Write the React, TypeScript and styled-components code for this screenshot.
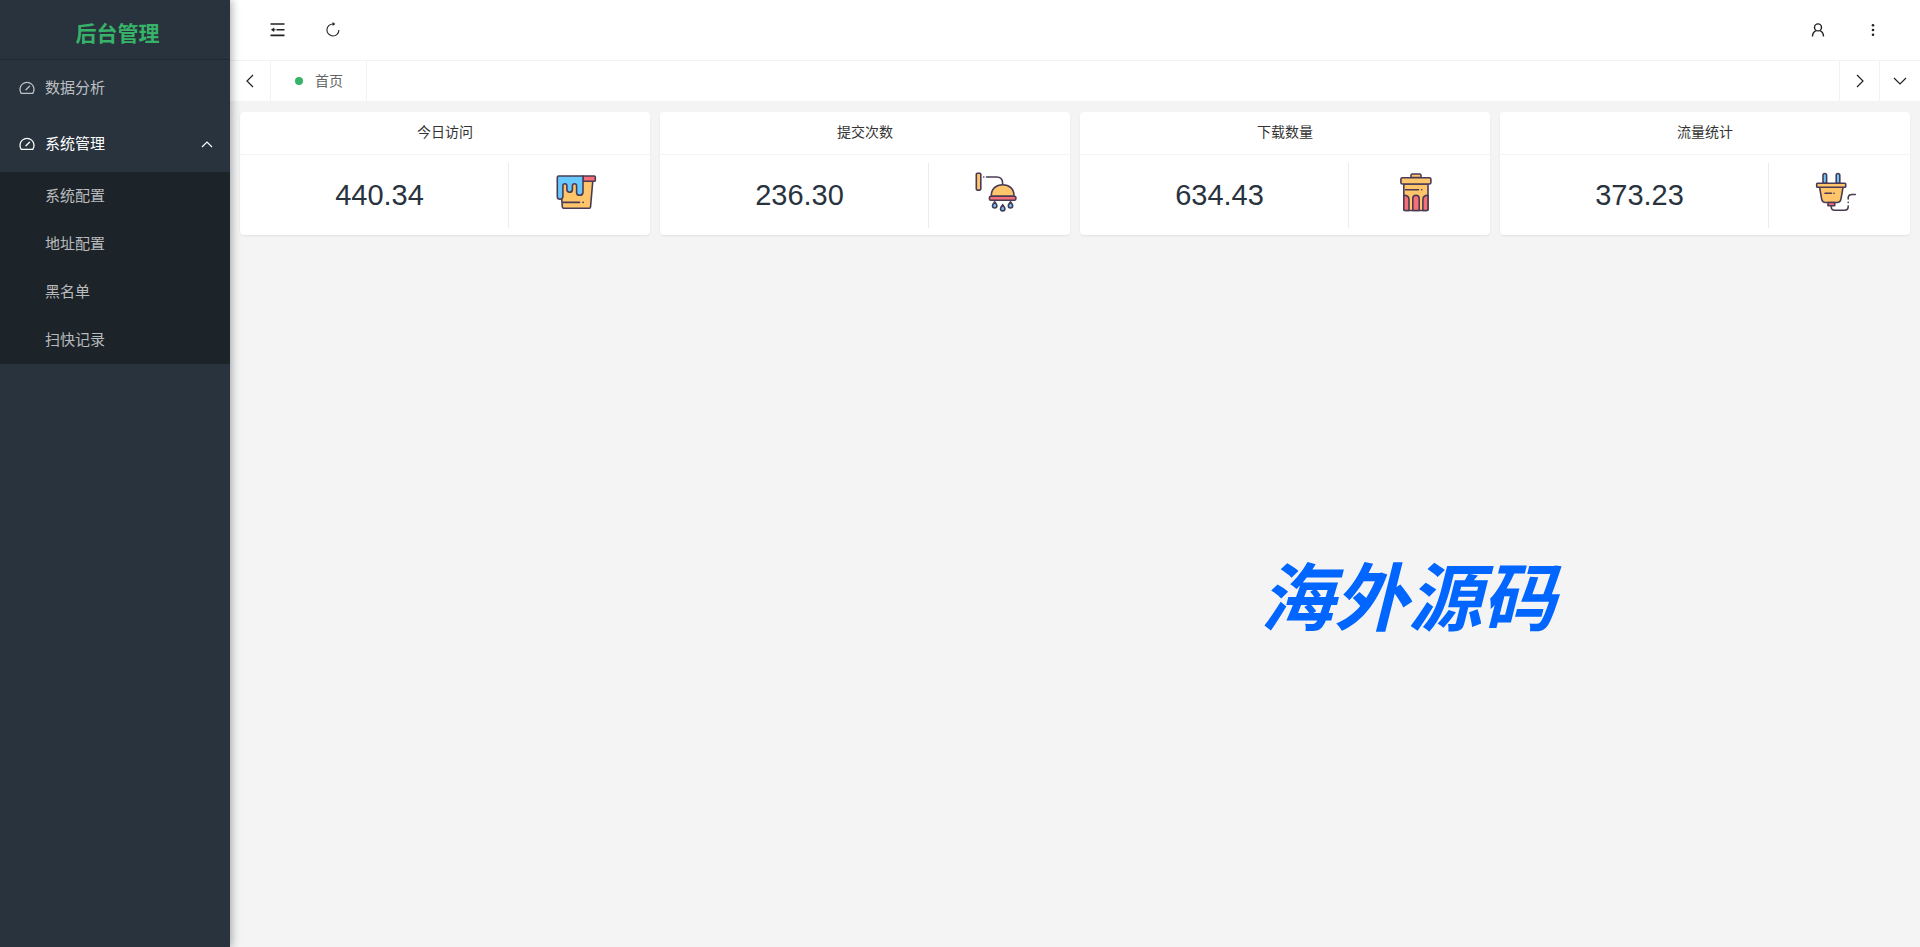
import React from "react";
import styled, { createGlobalStyle } from "styled-components";

const GlobalStyle = createGlobalStyle`
  *, *::before, *::after { box-sizing: border-box; }
  body {
    margin: 0;
    background: #f4f4f4;
    color: #333;
    font: 14px/24px "Liberation Sans", "Noto Sans CJK SC", sans-serif;
  }
  h1, h2, p, ul { margin: 0; padding: 0; }
  ul { list-style: none; }
  a { color: inherit; text-decoration: none; }
`;

const Shell = styled.div`
  display: flex;
  min-height: 100vh;
`;

const Sidebar = styled.aside`
  flex: 0 0 230px;
  background: #28333e;
  box-shadow: 2px 0 8px rgba(29, 35, 41, 0.35);
  z-index: 1;
`;

const Brand = styled.h1`
  height: 60px;
  padding: 8px 0 0 5px;
  border-bottom: 1px solid #1f2930;
  color: #36b368;
  font-size: 21px;
  font-weight: 700;
  line-height: 52px;
  text-align: center;
`;

const MenuLink = styled.a<{ $active?: boolean }>`
  display: flex;
  align-items: center;
  gap: 10px;
  height: 56px;
  padding: 0 16px 0 19px;
  color: ${(p) => (p.$active ? "#fff" : "rgba(255, 255, 255, 0.7)")};
  font-size: 15px;

  span { flex: 1; }
`;

const SubMenu = styled.ul`
  border-radius: 2px;
  background: #1c2329;
`;

const SubLink = styled.a`
  display: block;
  padding-left: 45px;
  color: rgba(255, 255, 255, 0.7);
  font-size: 15px;
  line-height: 48px;
`;

const Main = styled.div`
  flex: 1;
  min-width: 0;
`;

const Header = styled.header`
  display: flex;
  justify-content: space-between;
  height: 61px;
  padding: 0 20px;
  border-bottom: 1px solid #f2f2f2;
  background: #fff;
`;

const Tools = styled.div`
  display: flex;
`;

const IconButton = styled.button<{ $width: number }>`
  display: flex;
  align-items: center;
  justify-content: center;
  width: ${(p) => p.$width}px;
  padding: 0;
  border: 0;
  background: none;
  color: #222;
  cursor: pointer;
`;

const TabBar = styled.nav`
  display: flex;
  height: 40px;
  background: #fff;

  > * + * { border-left: 1px solid #f2f2f2; }
`;

const TabList = styled.div`
  display: flex;
  flex: 1;
`;

const Tab = styled.a`
  display: flex;
  align-items: center;
  gap: 12px;
  padding: 0 23px 0 24px;
  border-right: 1px solid #f2f2f2;
  color: #666;
  line-height: 38px;

  &::before {
    content: "";
    width: 8px;
    height: 8px;
    border-radius: 50%;
    background: #36b368;
  }
`;

const Content = styled.main`
  position: relative;
  padding: 11px 10px;
`;

const CardGrid = styled.div`
  display: grid;
  grid-template-columns: repeat(4, 1fr);
  gap: 10px;
`;

const Card = styled.section`
  border-radius: 4px;
  background: #fff;
  box-shadow: 0 1px 2px rgba(0, 0, 0, 0.08);
`;

const CardTitle = styled.h2`
  height: 43px;
  border-bottom: 1px solid #f4f4f4;
  font-size: 14px;
  font-weight: 400;
  line-height: 40px;
  text-align: center;
`;

const CardBody = styled.div`
  display: flex;
  height: 80px;
  padding: 8px 7px 7px 11px;
`;

const Figure = styled.p`
  flex: 1;
  color: #28333e;
  font-size: 29px;
  line-height: 64px;
  text-align: center;
`;

const Picture = styled.div`
  display: flex;
  flex: 0 0 135px;
  justify-content: center;
  padding-top: 9px;
  border-left: 1px solid #ebebf3;
`;

const Watermark = styled.div`
  position: absolute;
  top: 454px;
  right: 364px;
  color: #06f;
  font-size: 74px;
  font-style: italic;
  font-weight: 700;
  line-height: 90px;
  pointer-events: none;
`;

const GaugeIcon = () => (
  <svg width="16" height="16" viewBox="0 0 16 16" fill="none" stroke="currentColor" strokeWidth="1.3" strokeLinecap="round" aria-hidden="true">
    <path d="M2.200 13.300A7 7 0 1 1 13.800 13.300Z" strokeLinejoin="round" />
    <path d="M7 9.800 10.500 6.300" />
  </svg>
);

const Chevron = ({ points }: { points: string }) => (
  <svg width="14" height="14" viewBox="0 0 14 14" fill="none" stroke="currentColor" strokeWidth="1.2" aria-hidden="true">
    <polyline points={points} />
  </svg>
);

const FoldIcon = () => (
  <svg width="16" height="14" viewBox="0 0 16 14" fill="currentColor" aria-hidden="true">
    <path d="M.5.200h14v1.600H.5zM6.500 5.900h8v1.500h-8zM.5 11.600h14v1.600H.5z" />
    <path d="M4.200 4.500v4.400L.900 6.700zM4 6.200h1.600v1H4z" />
  </svg>
);

const ReloadIcon = () => (
  <svg width="16" height="16" viewBox="0 0 16 16" fill="none" stroke="currentColor" strokeWidth="1.100" aria-hidden="true">
    <path d="M8.500 2A6 6 0 1 0 13.900 8" />
    <path d="M7.600 0 10.300 2 7.600 4z" fill="currentColor" stroke="none" />
  </svg>
);

const UserIcon = () => (
  <svg width="14" height="14" viewBox="0 0 14 14" fill="none" stroke="currentColor" strokeWidth="1.400" aria-hidden="true">
    <circle cx="7" cy="4.400" r="3.500" />
    <path d="M1.500 13.500c0-3.200 1.600-5 3.700-5.800M12.500 13.500c0-3.200-1.600-5-3.700-5.800" />
  </svg>
);

const MoreIcon = () => (
  <svg width="4" height="14" viewBox="0 0 4 14" fill="currentColor" aria-hidden="true">
    <circle cx="2" cy="2.200" r="1.300" />
    <circle cx="2" cy="7" r="1.300" />
    <circle cx="2" cy="11.800" r="1.300" />
  </svg>
);

const ORANGE = "#ffc56b";
const BLUE = "#68c9ff";
const RED = "#f76e76";

const Art = ({ children }: { children: React.ReactNode }) => (
  <svg
    width="40"
    height="40"
    viewBox="0 0 40 40"
    overflow="visible"
    fill="none"
    stroke="#493b56"
    strokeWidth="1.600"
    strokeLinecap="round"
    strokeLinejoin="round"
    aria-hidden="true"
  >
    {children}
  </svg>
);

const BucketArt = () => (
  <Art>
    <path d="M5.800 9H36.800L34.500 35.200Q34.400 36.300 33.300 36.300H7.600Q6.500 36.300 6.400 35.200L5.400 24Z" fill={ORANGE} />
    <path d="M27 4H38.200Q39.300 4 39.300 5V8.200Q39.300 9.300 38.200 9.300H27Z" fill={RED} />
    <path d="M27 4H2.800Q1.300 4 1.300 5.500V24.500Q1.300 27.200 4 27.200T6.900 24.500V14Q6.900 11.800 8.900 11.800T10.900 14V17.600Q10.900 20.200 13.600 20.200T16.400 17.600V14Q16.400 11.800 18.500 11.800T20.600 14V20.400Q20.600 23.300 23.700 23.300T27 20.400Z" fill={BLUE} />
    <path d="M7 30.400H23.500M27 30.400H27.200" />
  </Art>
);

const ShowerArt = () => (
  <Art>
    <rect x="0.300" y="1.300" width="4.500" height="16.800" rx="1" fill={ORANGE} />
    <path d="M7.700 5H7.800M10.500 5H20.500Q26.600 5 26.600 11V12.600" />
    <path d="M15.300 24.300V23.500C15.300 16.800 20 12.800 26.700 12.800S38 16.800 38 23.500V24.300Z" fill={ORANGE} />
    <rect x="13.400" y="24.300" width="26.500" height="4" rx="1.500" fill={RED} />
    <path d="M18.700 29.800Q16.500 32.500 16.500 33.800A2.200 2.200 0 0 0 20.900 33.800Q20.900 32.500 18.700 29.800Z" fill={BLUE} />
    <path d="M26.700 32.700Q24.500 35.400 24.500 36.700A2.200 2.200 0 0 0 28.900 36.700Q28.900 35.400 26.700 32.700Z" fill={BLUE} />
    <path d="M34.500 29.800Q32.300 32.500 32.300 33.800A2.200 2.200 0 0 0 36.700 33.800Q36.700 32.500 34.500 29.800Z" fill={BLUE} />
  </Art>
);

const BinArt = () => (
  <Art>
    <path d="M15 5.500V3.600Q15 2 16.600 2H23.400Q25 2 25 3.600V5.500Z" fill={ORANGE} />
    <rect x="7.800" y="12" width="24.200" height="26.500" rx="1" fill={ORANGE} />
    <path d="M7.800 23.200Q13 23.200 13 27.500V38.500H8.800Q7.800 38.500 7.800 37.500ZM16.800 38.500V26.500Q16.800 23.200 20 23.200T23.200 26.500V38.500ZM32 23.200Q26.900 23.200 26.900 27.500V38.500H31Q32 38.500 32 37.500Z" fill={RED} />
    <rect x="4.900" y="5.700" width="30" height="6.300" rx="1.500" fill={ORANGE} />
    <path d="M9.500 17.800H22.500M25.700 17.800H25.800" />
  </Art>
);

const PlugArt = () => (
  <Art>
    <path d="M7 11.300V3.300Q7 1.500 8.800 1.500T10.600 3.300V11.300ZM20.200 11.300V3.300Q20.200 1.500 22 1.500T23.800 3.300V11.300Z" fill={BLUE} />
    <path d="M3.600 15.300H27L25 26.800Q24.300 30.500 21 30.500H9.600Q6.300 30.500 5.600 26.800Z" fill={ORANGE} />
    <rect x="0.700" y="11.300" width="29" height="4" rx="0.800" fill={ORANGE} />
    <path d="M12 30.500H18.700V33.700H12Z" fill={RED} />
    <path d="M9 21.300H15.500M18 21.300H18.100" />
    <path d="M15.300 34V35Q15.300 38.300 18.700 38.300H28.500Q32.200 38.300 32.200 34.600V34M32.200 30.400V30.300M32.200 27V26Q32.200 22.500 36 22.500H39.300" />
  </Art>
);

const subItems = ["系统配置", "地址配置", "黑名单", "扫快记录"];

const stats = [
  { title: "今日访问", value: "440.34", art: <BucketArt /> },
  { title: "提交次数", value: "236.30", art: <ShowerArt /> },
  { title: "下载数量", value: "634.43", art: <BinArt /> },
  { title: "流量统计", value: "373.23", art: <PlugArt /> },
];

export default function App() {
  return (
    <Shell lang="zh-CN">
      <GlobalStyle />
      <Sidebar>
        <Brand>后台管理</Brand>
        <nav>
          <MenuLink href="#analysis">
            <GaugeIcon />
            <span>数据分析</span>
          </MenuLink>
          <MenuLink href="#system" $active>
            <GaugeIcon />
            <span>系统管理</span>
            <Chevron points="2,10 7,5 12,10" />
          </MenuLink>
          <SubMenu>
            {subItems.map((item) => (
              <li key={item}>
                <SubLink href={`#${item}`}>{item}</SubLink>
              </li>
            ))}
          </SubMenu>
        </nav>
      </Sidebar>
      <Main>
        <Header>
          <Tools>
            <IconButton $width={55} aria-label="收起菜单"><FoldIcon /></IconButton>
            <IconButton $width={55} aria-label="刷新"><ReloadIcon /></IconButton>
          </Tools>
          <Tools>
            <IconButton $width={55} aria-label="用户"><UserIcon /></IconButton>
            <IconButton $width={55} aria-label="更多"><MoreIcon /></IconButton>
          </Tools>
        </Header>
        <TabBar>
          <IconButton $width={40} aria-label="向左"><Chevron points="10,1 4,7 10,13" /></IconButton>
          <TabList>
            <Tab href="#home">首页</Tab>
          </TabList>
          <IconButton $width={40} aria-label="向右"><Chevron points="4,1 10,7 4,13" /></IconButton>
          <IconButton $width={41} aria-label="展开"><Chevron points="1,4 7,10 13,4" /></IconButton>
        </TabBar>
        <Content>
          <CardGrid>
            {stats.map((stat) => (
              <Card key={stat.title}>
                <CardTitle>{stat.title}</CardTitle>
                <CardBody>
                  <Figure>{stat.value}</Figure>
                  <Picture>{stat.art}</Picture>
                </CardBody>
              </Card>
            ))}
          </CardGrid>
          <Watermark>海外源码</Watermark>
        </Content>
      </Main>
    </Shell>
  );
}
